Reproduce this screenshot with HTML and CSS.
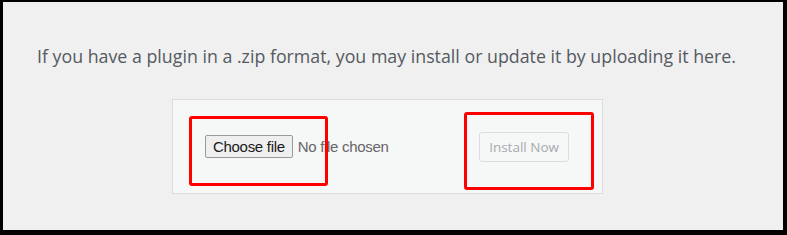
FILE: index.html
```html
<!DOCTYPE html>
<html lang="en">
<head>
    <meta charset="UTF-8">
    <meta name="viewport" content="width=device-width, initial-scale=1.0">
    <title>Upload Plugin</title>
    <link rel="stylesheet" href="styles.css">
</head>
<body>
    <div class="frame">
        <p class="install-help">If you have a plugin in a .zip format, you may install or update it by uploading it here.</p>
        <form class="upload-form">
            <label class="file-field">
                <input type="file" name="pluginzip" accept=".zip">
                <span class="file-btn">Choose file</span>
                <span class="file-name">No file chosen</span>
            </label>
            <button type="submit" class="install-btn" disabled>Install Now</button>
            <!-- annotation boxes from the tutorial screenshot -->
            <span class="mark mark-file"></span>
            <span class="mark mark-install"></span>
        </form>
    </div>
</body>
</html>
```

FILE: styles.css
```css
* {
    box-sizing: border-box;
}

body {
    margin: 0;
    font-family: 'Open Sans', 'Noto Sans', sans-serif;
}

.frame {
    height: 235px;
    background: #f0f0f0;
    border-style: solid;
    border-color: #000;
    border-width: 2px 4px 5px 3px;
    padding-top: 40px;
}

.install-help {
    margin: 0 0 29px 34px;
    font-size: 17.8px;
    line-height: 28px;
    color: #555a60;
}

.upload-form {
    position: relative;
    display: flex;
    align-items: center;
    width: 431px;
    height: 95px;
    margin-left: 169px;
    padding: 0 33px 0 32px;
    background: #f6f7f7;
    border: 1px solid #dcdcde;
}

.file-field {
    display: flex;
    align-items: center;
    gap: 5px;
    font-family: 'Liberation Sans', Arial, sans-serif;
    font-size: 15px;
    letter-spacing: -0.3px;
    cursor: pointer;
}

.file-field input {
    display: none;
}

.file-btn {
    display: flex;
    align-items: center;
    height: 23px;
    padding: 0 7px;
    color: #1a1a1a;
    background: #efefef;
    border: 1px solid #9a9a9a;
    border-radius: 2px;
}

.file-name {
    color: #666;
}

.install-btn {
    margin-left: auto;
    height: 30px;
    padding: 0 9px;
    font-family: 'Open Sans', 'Noto Sans', sans-serif;
    font-size: 13.5px;
    color: #a7aaad;
    background: #f6f7f7;
    border: 1px solid #dcdcde;
    border-radius: 3px;
}

.mark {
    position: absolute;
    border: 3px solid #f00;
    border-radius: 3px;
}

.mark-file {
    left: 16px;
    top: 16px;
    width: 139px;
    height: 70px;
}

.mark-install {
    left: 291px;
    top: 12px;
    width: 130px;
    height: 78px;
}
```
